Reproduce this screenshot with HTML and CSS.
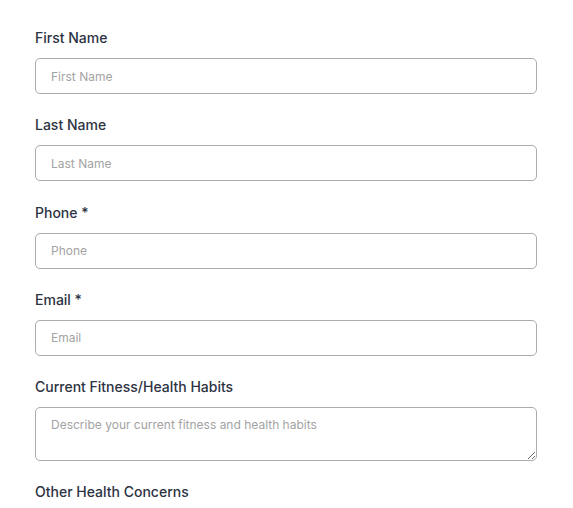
FILE: index.html
```html
<!DOCTYPE html>
<html>
<head>
<meta charset="utf-8">
<link rel="stylesheet" href="styles.css">
</head>
<body>
<form class="form">
  <div class="field">
    <label class="label">First Name</label>
    <input class="input" type="text" placeholder="First Name">
  </div>
  <div class="field">
    <label class="label">Last Name</label>
    <input class="input" type="text" placeholder="Last Name">
  </div>
  <div class="field">
    <label class="label">Phone *</label>
    <input class="input" type="text" placeholder="Phone">
  </div>
  <div class="field">
    <label class="label">Email *</label>
    <input class="input" type="text" placeholder="Email">
  </div>
  <div class="field">
    <label class="label">Current Fitness/Health Habits</label>
    <textarea class="input textarea" placeholder="Describe your current fitness and health habits"></textarea>
  </div>
  <div class="field">
    <label class="label">Other Health Concerns</label>
    <textarea class="input textarea" placeholder="Describe any other health concerns"></textarea>
  </div>
</form>
</body>
</html>
```
FILE: styles.css
```css
html, body {
  margin: 0;
  padding: 0;
  background: #ffffff;
}
body {
  font-family: Inter, "Noto Sans", sans-serif;
  padding: 27px 36px 0 35px;
  overflow: hidden;
}
.form {
  display: flex;
  flex-direction: column;
  gap: 20.25px;
}
.field {
  display: flex;
  flex-direction: column;
  gap: 10px;
}
.label {
  font-size: 14px;
  line-height: 21px;
  font-weight: 500;
  color: #2d3342;
}
.input {
  box-sizing: border-box;
  width: 100%;
  height: 36px;
  margin: 0;
  padding: 0 15px;
  border: 1px solid #ababab;
  border-radius: 5px;
  font-family: Inter, "Noto Sans", sans-serif;
  font-size: 12px;
  color: #333;
  background: #fff;
  outline: none;
}
.input::placeholder {
  color: #a3a3a3;
}
.textarea {
  display: block;
  height: 54px;
  padding: 9px 15px;
  line-height: 16px;
  resize: vertical;
}
```
